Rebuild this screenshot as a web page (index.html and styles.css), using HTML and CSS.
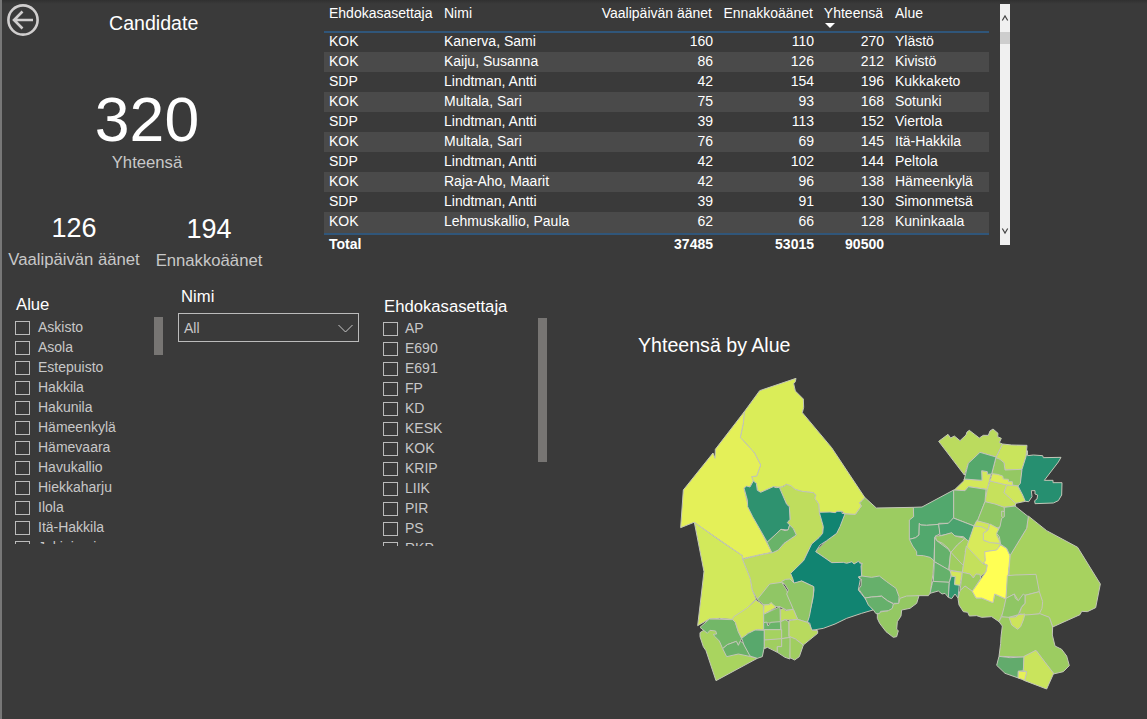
FILE: index.html
```html
<!DOCTYPE html>
<html lang="fi">
<head>
<meta charset="utf-8">
<title>Candidate</title>
<link rel="stylesheet" href="styles.css">
</head>
<body>
<main class="report">
  <section class="top">
    <div class="summary">
      <header class="heading">
        <svg class="back" viewBox="0 0 32 32"><circle cx="16" cy="16" r="14.6"/><path d="M26 16H7M15.500 7.500L7 16l8.500 8.500"/></svg>
        <h1 class="title">Candidate</h1>
      </header>
      <div class="card card-main"><div class="value">320</div><div class="label">Yhteensä</div></div>
      <div class="pair">
        <div class="card card-day"><div class="value">126</div><div class="label">Vaalipäivän äänet</div></div>
        <div class="card card-early"><div class="value">194</div><div class="label">Ennakkoäänet</div></div>
      </div>
    </div>
    <table class="votes">
      <colgroup><col class="c1"><col class="c2"><col class="c3"><col class="c4"><col class="c5"><col class="c6"></colgroup>
      <thead><tr><th>Ehdokasasettaja</th><th>Nimi</th><th class="n">Vaalipäivän äänet</th><th class="n">Ennakkoäänet</th><th class="n sorted">Yhteensä</th><th>Alue</th></tr></thead>
      <tbody>
        <tr><td>KOK</td><td>Kanerva, Sami</td><td class="n">160</td><td class="n">110</td><td class="n">270</td><td>Ylästö</td></tr>
        <tr><td>KOK</td><td>Kaiju, Susanna</td><td class="n">86</td><td class="n">126</td><td class="n">212</td><td>Kivistö</td></tr>
        <tr><td>SDP</td><td>Lindtman, Antti</td><td class="n">42</td><td class="n">154</td><td class="n">196</td><td>Kukkaketo</td></tr>
        <tr><td>KOK</td><td>Multala, Sari</td><td class="n">75</td><td class="n">93</td><td class="n">168</td><td>Sotunki</td></tr>
        <tr><td>SDP</td><td>Lindtman, Antti</td><td class="n">39</td><td class="n">113</td><td class="n">152</td><td>Viertola</td></tr>
        <tr><td>KOK</td><td>Multala, Sari</td><td class="n">76</td><td class="n">69</td><td class="n">145</td><td>Itä-Hakkila</td></tr>
        <tr><td>SDP</td><td>Lindtman, Antti</td><td class="n">42</td><td class="n">102</td><td class="n">144</td><td>Peltola</td></tr>
        <tr><td>KOK</td><td>Raja-Aho, Maarit</td><td class="n">42</td><td class="n">96</td><td class="n">138</td><td>Hämeenkylä</td></tr>
        <tr><td>SDP</td><td>Lindtman, Antti</td><td class="n">39</td><td class="n">91</td><td class="n">130</td><td>Simonmetsä</td></tr>
        <tr><td>KOK</td><td>Lehmuskallio, Paula</td><td class="n">62</td><td class="n">66</td><td class="n">128</td><td>Kuninkaala</td></tr>
      </tbody>
      <tfoot><tr><td>Total</td><td></td><td class="n">37485</td><td class="n">53015</td><td class="n">90500</td><td></td></tr></tfoot>
    </table>
    <div class="scroll">
      <svg class="chev" viewBox="0 0 10 28"><path d="M2.300 16.500L5 12l2.700 4.500"/></svg>
      <div class="thumb"></div>
      <svg class="chev chev-down" viewBox="0 0 10 28"><path d="M2.300 11.500L5 16l2.700-4.500"/></svg>
    </div>
  </section>
  <section class="bottom">
    <div class="slicer slicer-area">
      <h2>Alue</h2>
      <div class="slicer-body">
        <ul><li>Askisto</li><li>Asola</li><li>Estepuisto</li><li>Hakkila</li><li>Hakunila</li><li>Hämeenkylä</li><li>Hämevaara</li><li>Havukallio</li><li>Hiekkaharju</li><li>Ilola</li><li>Itä-Hakkila</li><li>Jokiniemi</li></ul>
        <div class="bar"></div>
      </div>
    </div>
    <div class="filter">
      <h2>Nimi</h2>
      <div class="select"><span>All</span><svg viewBox="0 0 15 9"><path d="M.5 1L7.500 8 14.500 1"/></svg></div>
    </div>
    <div class="slicer slicer-party">
      <h2>Ehdokasasettaja</h2>
      <div class="slicer-body">
        <ul><li>AP</li><li>E690</li><li>E691</li><li>FP</li><li>KD</li><li>KESK</li><li>KOK</li><li>KRIP</li><li>LIIK</li><li>PIR</li><li>PS</li><li>RKP</li></ul>
        <div class="bar"></div>
      </div>
    </div>
    <div class="map-panel">
      <h2 class="title">Yhteensä by Alue</h2>
      <svg class="map" viewBox="0 0 1320 990">
        <!-- north-west -->
        <g>
          <path fill="#9ccc61" d="M584 382L619 414 730 412 740 545 800 560 791 578 789 610 781 669 775 677 747 677 690 692 675 700 575 622 575 580 565 574 552 582 540 577 530 580 485 578 437 545 470 512 500 490 525 431 556 433 574 408 568 398 576 392Z"/>
          <path fill="#daed58" d="M269 62L378 25 376 35 371 41 376 63 400 87 401 112 397 128 485 233 584 382 576 392 568 398 574 408 556 433 525 431 516 424 501 424 496 428 448 427 446 402 434 385 437 376 430 368 395 364 375 358 350 343 333 352 310 350 272 367 262 361 259 340 250 333 245 320 260 318 272 285 253 248 211 202 220 160 223 125Z"/>
          <path fill="#e4f058" d="M223 125L220 160 211 202 253 248 272 285 260 318 245 320 250 333 240 350 222 354 235 410 289 515 306 547 270 554 217 566 217 557 72 457 32 473 40 360 129 249 135 265 136 238Z"/>
          <path fill="#d2e95b" d="M73 457L147 510 217 557 218 568 241 625 247 660 258 688 232 714 196 740 188 748 148 745 118 747 83 767 102 605Z"/>
          <path fill="#bfdd5d" d="M328 352L340 350 350 343 363 347 375 358 395 364 430 368 437 376 434 385 446 402 448 427 460 470 458 490 447 503 425 522 401 572 362 610 370 626 372 641 345 640 299 650 262 688 247 660 241 625 218 568 270 555 306 548 325 540 342 520 379 495 370 476 358 464 352 458 360 448 358 410 350 403Z"/>
          <path fill="#2e926f" d="M222 354L230 348 240 351 250 333 259 340 262 361 272 367 310 350 318 353 328 352 350 403 358 410 360 448 352 458 359 465 354 480 333 478 292 517 248 440 233 410 232 390Z"/>
          <path fill="#69b369" d="M291 517L333 478 345 482 354 480 359 465 370 476 379 495 342 520 325 540 306 549Z"/>
          <path fill="#118471" d="M448 427L480 426 496 428 501 424 516 424 516 430 525 431 510 470 500 490 470 512 450 525 437 545 465 564 485 578 520 577 530 580 540 577 546 575 552 582 565 574 572 582 577 580 573 588 575 618 565 622 571 628 565 660 585 685 609 720 575 730 530 745 495 762 460 775 425 781 419 759 412 755 418 730 428 690 432 660 431 650 395 633 372 641 369 628 362 610 401 572 425 522 447 503 458 490 460 470Z"/>
        </g>
        <!-- south-west -->
        <g transform="translate(0 450)">
          <path fill="#a9d45f" d="M90 338L110 325 145 325 160 380 243 410 262 415 138 482 108 392 100 380 90 350Z"/>
          <path fill="#73b768" d="M90 322L118 297 188 299 196 307 205 335 215 355 211 365 205 376 199 364 172 374 158 386 148 363 135 350 130 343 140 342 137 333 120 331 112 340Z"/>
          <path fill="#69b068" d="M158 386L172 374 199 364 205 376 211 363 220 370 243 410 205 402 170 410Z"/>
          <path fill="#cde45b" d="M188 299L190 291 230 265 258 240 280 256 281 330 262 329 235 340 215 355 205 335 196 307Z"/>
          <path fill="#58a86c" d="M215 355L235 340 255 330 283 331 283 380 277 410 262 415 240 408 222 375Z"/>
          <path fill="#90c665" d="M262 238L299 192 335 187 350 210 370 268 350 270 330 260 318 260 310 256 303 248 297 254 282 255Z"/>
          <path fill="#90c665" d="M335 184L347 178 360 177 372 189 395 183 431 200 430 225 418 290 412 307 383 298 370 268 350 222 355 210 346 195Z"/>
          <path fill="#d9eb59" d="M282 255L297 254 303 248 318 262 281 283Z"/>
          <path fill="#84c066" d="M281 283L330 260 331 307 281 310Z"/>
          <path fill="#69b369" d="M281 308L290 306 294 318 302 307 331 305 332 329 281 329Z"/>
          <path fill="#c0de5d" d="M332 268L340 266 347 272 370 268 383 298 355 300 345 299 332 305Z"/>
          <path fill="#94c863" d="M332 305L345 299 357 306 357 350 362 352 335 356Z"/>
          <path fill="#b8da5e" d="M357 302L383 298 412 307 419 314 425 330 443 332 443 340 400 375 376 357 357 350Z"/>
          <path fill="#a5d260" d="M283 329L335 329 335 358 283 360Z"/>
          <path fill="#a0ce60" d="M283 360L335 356 335 380 322 380 322 397 292 382 283 386Z"/>
          <path fill="#94c863" d="M335 356L362 352 360 417 345 412 322 397 322 380 335 380Z"/>
          <path fill="#a0ce60" d="M360 350L376 357 400 375 388 410 374 420 360 413Z"/>
        </g>
        <!-- centre -->
        <g transform="translate(390 300)">
          <path fill="#94c863" d="M232 428L232 445 239 460 258 485 280 502 290 500 295 482 290 478 292 455 303 438 305 420 330 415 350 400 357 377 320 378 300 385 296 400 280 402 265 422 240 426Z"/>
          <path fill="#66b06b" d="M176 320L186 318 215 322 238 318 260 335 288 355 297 380 296 400 280 400 262 392 245 378 215 381 195 384 176 357 183 348 184 327Z"/>
          <path fill="#66b06b" d="M195 384L215 381 245 379 262 392 280 402 277 415 265 422 242 424 238 431 228 431 220 420 205 405Z"/>
          <path fill="#52a86d" d="M340 112L366 111 461 60 461 143 450 160 416 160 416 163 380 166 362 165 358 160 357 195 347 203 328 208 328 150 341 140Z"/>
          <path fill="#52a86d" d="M358 160L362 165 380 166 416 163 421 190 405 200 403 240 402 275 400 270 390 262 370 257 350 256 350 245 338 228 328 208 347 203 357 195Z"/>
        </g>
        <!-- north-east -->
        <g transform="translate(690 150)">
          <path fill="#8fc664" d="M200 190L340 215 346 257 320 400 110 440 120 345 165 340 170 290Z"/>
          <path fill="#bbdb5e" d="M116 64L144 43 152 54 163 48 180 62 198 45 201 36 208 31 238 54 250 46 265 46 270 33 279 27 294 40 293 50 304 55 298 68 308 72 288 111 240 97 205 130 193 165Z"/>
          <path fill="#c9e45c" d="M308 72L335 75 381 76 378 110 366 148 315 150 312 128 288 113Z"/>
          <path fill="#94c863" d="M288 113L300 118 312 128 315 150 366 148 362 190 354 198 338 195 275 162Z"/>
          <path fill="#d4e85a" d="M192 177L246 181 245 152 262 155 273 162 262 208 205 200 195 212 163 210 192 182Z"/>
          <path fill="#55a86c" d="M240 97L288 111 275 162 262 163 262 155 245 152 246 181 193 177 205 130Z"/>
          <path fill="#c6e15c" d="M270 182L320 195 312 218 348 250 344 258 313 262 255 245 262 208Z"/>
          <path fill="#dcec58" d="M277 161L292 163 308 168 310 177 325 178 326 185 337 185 338 197 320 195 270 183Z"/>
          <path fill="#cfe65b" d="M320 195L354 198 368 225 376 244 347 250 312 218Z"/>
          <path fill="#268f70" d="M382 92L383 107 400 105 428 107 430 113 483 112 475 126 433 181 459 181 459 188 486 188 485 225 475 242 460 249 405 251 404 242 411 237 413 225 405 222 405 212 394 212 396 230 386 245 376 244 368 225 354 198 361 190 366 148 378 110Z"/>
          <path fill="#73b768" d="M161 210L195 212 205 200 258 208 255 245 232 305 222 318 161 294Z"/>
          <path fill="#8fc664" d="M255 245L285 252 313 262 313 275 305 273 305 290 313 295 300 320 290 325 260 312 232 303Z"/>
          <path fill="#4ba36f" d="M116 312L145 310 160 294 222 318 209 367 190 350 165 348 155 340 120 347Z"/>
        </g>
        <!-- east and south-east -->
        <g transform="translate(690 450)">
          <path fill="#a7d25f" d="M385 -12L440 32 533 82 601 192 587 263 562 275 545 274 540 284 458 321 448 292 420 283 323 240 330 106 380 25Z"/>
          <path fill="#93c863" d="M106 48L125 47 155 38 165 48 195 55 172 75 152 98 145 85 128 70 110 62Z"/>
          <path fill="#a5d05f" d="M195 55L207 66 190 137 152 98 172 75Z"/>
          <path fill="#65b16b" d="M104 52L110 62 145 88 152 98 146 150 103 125Z"/>
          <path fill="#a0ce60" d="M152 96L190 137 187 157 147 150Z"/>
          <path fill="#65b16b" d="M103 125L147 150 155 160 148 187 100 185Z"/>
          <path fill="#5fac6b" d="M98 184L148 187 145 232 135 220 126 222 115 213 90 220Z"/>
          <path fill="#339670" d="M154 168L166 170 164 192 178 194 174 234 165 222 155 236 145 232 148 187Z"/>
          <path fill="#d4e75a" d="M151 152L187 157 180 196 164 194 166 170 154 168Z"/>
          <path fill="#d8ea5a" d="M222 18L245 20 265 28 250 40 252 62 302 72 290 92 255 95 256 122 248 132 195 95 205 66Z"/>
          <path fill="#d0e65b" d="M230 2L268 12 264 30 245 20 222 18Z"/>
          <path fill="#dfee58" d="M270 12L298 27 290 45 302 70 270 68 250 60 250 40 264 30Z"/>
          <path fill="#c4e05c" d="M199 78L222 103 250 132 262 135 258 155 242 170 228 162 220 174 210 162 187 157Z"/>
          <path fill="#9ecd60" d="M187 157L210 162 220 174 228 162 240 163 242 176 217 214 195 198 180 212Z"/>
          <path fill="#a7d25f" d="M180 212L195 198 217 214 228 234 245 234 279 248 284 222 318 237 312 270 297 305 275 290 245 292 230 287 208 288 203 277 190 275 177 255 174 235Z"/>
          <path fill="#ffff54" d="M302 75L320 85 330 106 318 237 284 222 279 248 245 234 228 234 217 214 258 155 262 135 250 130 256 122 254 95 290 90Z"/>
          <path fill="#70b568" d="M313 -38L345 -42 385 -10 380 25 330 107 320 85 302 73 298 50 290 40 300 20 305 -5 313 -10Z"/>
          <path fill="#9ccc61" d="M305 290L327 290 375 283 420 281 448 292 458 321 457 345 465 378 485 388 500 408 508 437 490 455 460 462 430 420 408 391 372 411 297 409 302 370 303 350 307 318 297 305Z"/>
          <path fill="#9bcb62" d="M322 167L345 165 408 163 418 215 375 226 355 242 343 222 318 235Z"/>
          <path fill="#a8d160" d="M375 226L418 215 428 245 426 265 418 281 390 284 370 285 358 280 365 262 375 250Z"/>
          <path fill="#8fc664" d="M318 235L343 222 346 235 355 242 370 222 375 226 375 250 365 260 355 284 327 292 305 290 312 262Z"/>
          <path fill="#cde45b" d="M327 292L348 291 355 284 375 282 370 300 362 320 353 328 335 315Z"/>
          <path fill="#62ab6c" d="M297 409L330 413 372 411 370 452 355 455 355 474 315 460 290 436Z"/>
          <path fill="#c9e45c" d="M372 409L408 391 430 420 461 460 440 507 374 482 380 455 370 452Z"/>
          <path fill="#e6f158" d="M355 453L380 455 374 482 366 478 354 474Z"/>
        </g>
      </svg>
    </div>
  </section>
</main>
</body>
</html>
```
FILE: styles.css
```css
* { box-sizing: border-box; }
body { margin: 0; background: #3a3a3a; color: #fff; font-family: "Liberation Sans", Arial, sans-serif; }
h1, h2, ul { margin: 0; padding: 0; font-weight: 400; list-style: none; }
.report { width: 1147px; height: 719px; border-left: 2px solid #777; overflow: hidden; background: linear-gradient(#303030, #3a3a3a 4px); }
.top { display: flex; align-items: flex-start; height: 285px; }
.summary { width: 322px; }
.heading { display: flex; height: 40px; padding: 4px 0 0 5px; }
.back { width: 32px; height: 32px; fill: none; stroke: #d0cece; stroke-width: 2.6; }
.title { font-size: 19.600px; line-height: 24px; }
.heading .title { margin: 7px 0 0 70px; }
.card { text-align: center; }
.label { color: #c8c8c8; font-size: 16.700px; line-height: 20px; white-space: nowrap; }
.card-main { width: 290px; padding-top: 46px; }
.card-main .value { margin-bottom: 1px; font-size: 62.500px; line-height: 66px; }
.pair { display: flex; padding: 40px 0 0 5px; }
.pair .value { font-size: 27px; line-height: 30px; }
.pair .label { margin-top: 7px; }
.card-day { width: 134px; }
.card-early { width: 108px; margin: 1px 0 0 14px; }

.votes { table-layout: fixed; width: 665px; border-collapse: collapse; font-size: 14px; line-height: 16px; }
.c1 { width: 115px; }
.c2 { width: 158px; }
.c3 { width: 122px; }
.c4 { width: 101px; }
.c5 { width: 70px; }
.c6 { width: 99px; }
.votes th, .votes td { padding: 1px 0 3px 5px; text-align: left; font-weight: 400; white-space: nowrap; height: 20px; }
.votes .n { text-align: right; padding-right: 6px; padding-left: 0; }
.votes th { height: 32px; padding-top: 5px; padding-bottom: 0; vertical-align: top; border-bottom: 2px solid #30567a; }
.votes th.n { padding-right: 7px; }
.votes tbody tr:first-child td { padding-top: 0; }
.votes tbody tr:nth-child(even) { background: #4a4a4a; }
.votes tbody tr:last-child td { height: 22px; padding-bottom: 4px; }
.votes tfoot td { font-weight: 700; border-top: 2px solid #30567a; }
.sorted::after { content: ""; display: block; width: 0; margin: 2px 0 0 5px; border: 5px solid transparent; border-top-color: #fff; border-bottom: 0; }

.scroll { display: flex; flex-direction: column; width: 10px; height: 241px; margin: 4px 0 0 11px; background: #f0f0f0; }
.chev { width: 10px; height: 28px; fill: none; stroke: #444; stroke-width: 1.2; }
.thumb { height: 12px; background: #cdcdcd; }
.chev-down { margin-top: auto; }

.bottom { display: flex; height: 434px; }
h2 { font-size: 16.700px; line-height: 20px; }
.slicer-body { display: flex; justify-content: space-between; height: 228px; overflow: hidden; }
.slicer li { display: flex; align-items: center; height: 20px; gap: 8px; color: #c8c8c8; font-size: 14px; line-height: 20px; }
.slicer li::before { content: ""; box-sizing: border-box; flex: none; width: 15px; height: 14px; margin-top: 1px; border: 1px solid #bbb; }
.slicer-area { width: 161px; padding: 10px 0 0 14px; }
.slicer-area .slicer-body { height: 227px; margin: 2px 0 0 -1px; }
.slicer-party { width: 163px; margin-left: 24px; padding: 12px 0 0; }
.slicer-party .slicer-body { margin: 1px 0 0 -1px; }
.slicer-party li { gap: 7px; }
.bar { width: 9px; background: #777573; }
.slicer-area .bar { height: 38px; }
.slicer-party .bar { height: 144px; }
.filter { width: 182px; margin-left: 15px; padding-top: 2px; }
.filter h2 { padding-left: 3px; }
.select { display: flex; align-items: center; justify-content: space-between; width: 181px; height: 29px; margin-top: 6px; padding: 0 5px 0 5px; border: 1px solid #bbb; color: #c8c8c8; font-size: 14px; }
.select svg { width: 15px; height: 9px; margin-top: 2px; fill: none; stroke: #c8c8c8; }
.map-panel { padding: 48px 0 0 91px; }
.map-panel .title { font-size: 19.600px; line-height: 24px; }
.map { display: block; width: 440px; height: 330px; margin: 13px 0 0 32px; stroke: #c3c6b8; stroke-width: 3; stroke-linejoin: round; }
```
